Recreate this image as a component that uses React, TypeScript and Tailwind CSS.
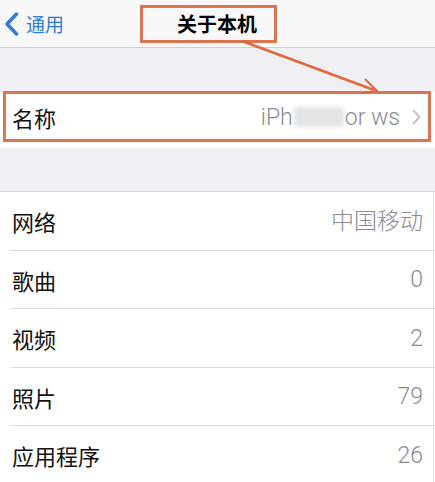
import React from "react";

const font = { fontFamily: '"Noto Sans CJK SC", "Noto Sans", sans-serif' };
const latin = { fontFamily: 'Roboto, "Noto Sans CJK SC", sans-serif' };

function Row({ label, value, last }: { label: string; value: string; last?: boolean }) {
  return (
    <div className="relative flex h-[58.5px] items-center justify-between bg-white pl-[12px] pr-[12px]">
      <span className="text-[22px] leading-none text-[#111]">{label}</span>
      <span className="text-[23px] font-light leading-none text-[#8a8a8f]" style={latin}>{value}</span>
      {!last && <div className="absolute bottom-0 left-[10px] right-0 h-px bg-[#dcdce0]" />}
    </div>
  );
}

export default function App() {
  return (
    <div className="relative h-[482px] w-[435px] overflow-hidden bg-[#efeff4]" style={font}>
      {/* nav bar */}
      <div className="flex h-[48px] items-center border-b border-[#cfcfd3] bg-[#f8f8f8] pl-[4px]">
        <svg width="15" height="24" viewBox="0 0 15 24" className="mr-[7px]">
          <path d="M12.5 2 L3 12 L12.5 22" fill="none" stroke="#2f7ad6" strokeWidth="3.5" strokeLinecap="round" strokeLinejoin="round" />
        </svg>
        <span className="text-[19px] leading-none text-[#2f7ad6]">通用</span>
        <div className="flex-1" />
      </div>
      {/* title (with annotation box) */}
      <div className="absolute left-[140px] top-[5px] flex h-[38px] w-[137px] items-center border-[3px] border-[#dc7450] pl-[34px]">
        <span className="text-[20px] font-bold leading-none text-black">关于本机</span>
      </div>

      <div className="h-[44px]" />

      {/* name row */}
      <div className="flex h-[56px] items-center justify-between bg-white pb-[6px] pl-[12px] pr-[14px]">
        <span className="text-[22px] leading-none text-[#111]">名称</span>
        <span className="flex items-center text-[23px] font-light leading-none text-[#8a8a8f]" style={latin}>
          <span>iPh</span>
          <span className="mx-[1px] inline-block h-[20px] w-[50px] bg-[#e4e4e7] blur-[2px]" />
          <span>or ws</span>
          <svg width="9" height="16" viewBox="0 0 9 16" className="ml-[12px]">
            <path d="M1.5 1.5 L7.5 8 L1.5 14.5" fill="none" stroke="#c4c4c8" strokeWidth="2" strokeLinecap="round" strokeLinejoin="round" />
          </svg>
        </span>
      </div>
      {/* name annotation box */}
      <div className="absolute left-[3px] top-[91px] h-[51px] w-[428px] border-[3px] border-[#dc7450]" />

      <div className="h-[44px] border-b border-[#d8d8dc]" />

      <Row label="网络" value="中国移动" />
      <Row label="歌曲" value="0" />
      <Row label="视频" value="2" />
      <Row label="照片" value="79" />
      <Row label="应用程序" value="26" last />

      {/* right edge line */}
      <div className="absolute bottom-0 right-[1px] top-[192px] w-px bg-[#e2e2e6]" />

      {/* arrow annotation */}
      <svg className="pointer-events-none absolute left-0 top-0" width="435" height="482">
        <line x1="242" y1="41" x2="374" y2="90" stroke="#e0683a" strokeWidth="2.5" />
        <path d="M365 79 L377 91 L361 93" fill="none" stroke="#e0683a" strokeWidth="2" strokeLinejoin="round" />
      </svg>
    </div>
  );
}
